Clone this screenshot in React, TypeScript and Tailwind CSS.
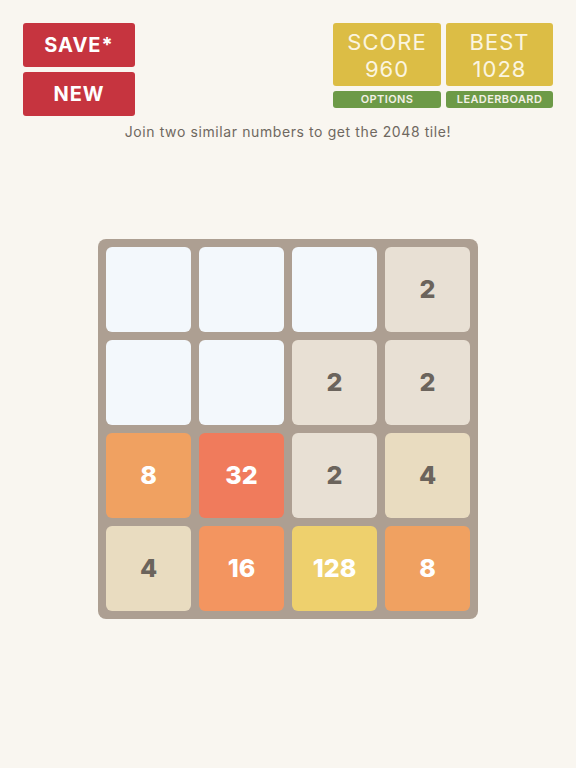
import React from "react";

const font = { fontFamily: "Inter, 'Open Sans', 'Liberation Sans', sans-serif" };

const grid: (number | null)[] = [
  null, null, null, 2,
  null, null, 2, 2,
  8, 32, 2, 4,
  4, 16, 128, 8,
];

function tileClass(v: number | null) {
  switch (v) {
    case null: return "bg-[#f3f8fc]";
    case 2: return "bg-[#e8e0d4] text-[#6b645c]";
    case 4: return "bg-[#e9dcc0] text-[#6b645c]";
    case 8: return "bg-[#f0a161] text-white";
    case 16: return "bg-[#f39560] text-white";
    case 32: return "bg-[#f07b5c] text-white";
    case 128: return "bg-[#eed06d] text-white";
    default: return "bg-[#eed06d] text-white";
  }
}

export default function App() {
  return (
    <div className="w-[576px] h-[768px] bg-[#f9f6f0] relative" style={font}>
      <div className="flex justify-between px-[23px] pt-[23px]">
        <div className="flex flex-col gap-[5px]">
          <div className="w-[112px] h-[44px] bg-[#c6343f] rounded-[3px] flex items-center justify-center text-white font-bold text-[20px] tracking-[1px]">SAVE*</div>
          <div className="w-[112px] h-[44px] bg-[#c6343f] rounded-[3px] flex items-center justify-center text-white font-bold text-[20px] tracking-[1px]">NEW</div>
        </div>
        <div className="flex gap-[5px]">
          <div className="flex flex-col gap-[5px] w-[108px]">
            <div className="h-[63px] bg-[#dcbd45] rounded-[3px] flex flex-col items-center justify-center pt-[2px] text-[#fbf5e0] text-[22px] leading-[27px] tracking-[1px]">
              <span>SCORE</span>
              <span>960</span>
            </div>
            <div className="h-[17px] bg-[#6d9a47] rounded-[3px] flex items-center justify-center text-[#f3f0e6] text-[11px] font-semibold tracking-[0.4px]">OPTIONS</div>
          </div>
          <div className="flex flex-col gap-[5px] w-[107px]">
            <div className="h-[63px] bg-[#dcbd45] rounded-[3px] flex flex-col items-center justify-center pt-[2px] text-[#fbf5e0] text-[22px] leading-[27px] tracking-[1px]">
              <span>BEST</span>
              <span>1028</span>
            </div>
            <div className="h-[17px] bg-[#6d9a47] rounded-[3px] flex items-center justify-center text-[#f3f0e6] text-[11px] font-semibold tracking-[0.4px]">LEADERBOARD</div>
          </div>
        </div>
      </div>
      <div className="text-center text-[14px] text-[#6f6860] mt-[5px] tracking-[0.6px]">Join two similar numbers to get the 2048 tile!</div>
      <div className="flex justify-center mt-[97px]">
        <div className="w-[380px] h-[380px] bg-[#ad9f92] rounded-[8px] p-[8px] grid grid-cols-4 gap-[8px]">
          {grid.map((v, i) => (
            <div key={i} className={`rounded-[6px] flex items-center justify-center text-[25px] font-extrabold ${tileClass(v)}`}>
              {v ?? ""}
            </div>
          ))}
        </div>
      </div>
    </div>
  );
}
